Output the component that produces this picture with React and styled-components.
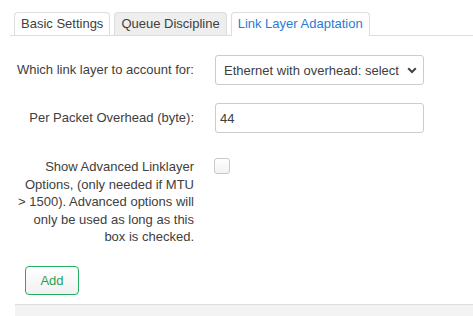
import React from 'react'
import styled, { createGlobalStyle } from 'styled-components'

const GlobalStyle = createGlobalStyle`
    body {
        margin: 0;
        background: #fff;
        color: #404040;
        font-family: "Liberation Sans", Arial, sans-serif;
        font-size: 13px;
    }
`

function App() {
    return (
        <Page>
            <GlobalStyle />
            <TabBar>
                <Tab>Basic Settings</Tab>
                <Tab muted>Queue Discipline</Tab>
                <Tab active>Link Layer Adaptation</Tab>
            </TabBar>

            <Content>
                <Row first>
                    <Label>Which link layer to account for:</Label>
                    <SelectWrap>
                        <Select defaultValue="ethernet">
                            <option value="ethernet">Ethernet with overhead: select interface-specific overhead</option>
                        </Select>
                        <Chevron width="10" height="7" viewBox="0 0 10 7">
                            <polyline points="1.2,1.2 5,5 8.8,1.2" fill="none" stroke="#444" strokeWidth="2" />
                        </Chevron>
                    </SelectWrap>
                </Row>

                <Row>
                    <Label>Per Packet Overhead (byte):</Label>
                    <Input defaultValue="44" />
                </Row>

                <Row top>
                    <Label multi>
                        Show Advanced Linklayer Options, (only needed if MTU &gt; 1500). Advanced options will only be used as long as this box is checked.
                    </Label>
                    <Checkbox />
                </Row>

                <Actions>
                    <AddButton>Add</AddButton>
                </Actions>

                <Footer />
            </Content>
        </Page>
    )
}

export default App

const Page = styled.div`
    padding-top: 12px;
`

const TabBar = styled.ul`
    display: flex;
    align-items: flex-end;
    gap: 4px;
    list-style: none;
    margin: 0 0 0 10px;
    padding: 0 0 0 4px;
    border-bottom: 1px solid #ddd;
    height: 23px;
`

const Tab = styled.li`
    height: ${p => (p.active ? '23px' : '22px')};
    line-height: 22px;
    margin-bottom: ${p => (p.active ? '-1px' : '0')};
    padding: 0 6px 0 6px;
    border: 1px solid #ddd;
    border-bottom: none;
    border-radius: 4px 4px 0 0;
    background: ${p => (p.muted ? '#eeeeee' : '#fff')};
    color: ${p => (p.active ? '#2b7bd4' : '#404040')};
    white-space: nowrap;
`

const Content = styled.div`
    padding-left: 15px;
`

const Row = styled.div`
    display: grid;
    grid-template-columns: 178px 209px;
    column-gap: 21px;
    align-items: ${p => (p.top ? 'start' : 'center')};
    padding-left: 1px;
    margin-top: ${p => (p.first ? '19px' : p.top ? '25px' : '18px')};
`

const Label = styled.label`
    text-align: right;
    line-height: ${p => (p.multi ? '17.5px' : '18px')};
`

const SelectWrap = styled.div`
    position: relative;
    height: 30px;
`

const Select = styled.select`
    appearance: none;
    width: 100%;
    height: 30px;
    box-sizing: border-box;
    padding: 0 24px 0 8px;
    border: 1px solid #ccc;
    border-radius: 3px;
    background: #fff;
    color: #404040;
    font-family: inherit;
    font-size: 13px;
    outline: none;
`

const Chevron = styled.svg`
    position: absolute;
    right: 7px;
    top: 12px;
    pointer-events: none;
`

const Input = styled.input`
    width: 100%;
    height: 30px;
    box-sizing: border-box;
    padding: 0 4px;
    border: 1px solid #ccc;
    border-radius: 3px;
    color: #404040;
    font-family: inherit;
    font-size: 13px;
    outline: none;
`

const Checkbox = styled.span`
    display: block;
    width: 16px;
    height: 16px;
    box-sizing: border-box;
    border: 1px solid #c8c8c8;
    border-radius: 3px;
    background: linear-gradient(#fff, #f2f2f2);
    margin-left: -1px;
`

const Actions = styled.div`
    padding: 20px 0 9px 10px;
`

const AddButton = styled.button`
    height: 29px;
    width: 54px;
    padding: 0;
    border: 1px solid #23ad5f;
    border-radius: 4px;
    background: linear-gradient(#fff, #f1f1f1);
    color: #1fa35a;
    font-family: inherit;
    font-size: 13px;
    cursor: pointer;
`

const Footer = styled.div`
    border-top: 1px solid #ddd;
    background: #f3f3f3;
    height: 20px;
`
